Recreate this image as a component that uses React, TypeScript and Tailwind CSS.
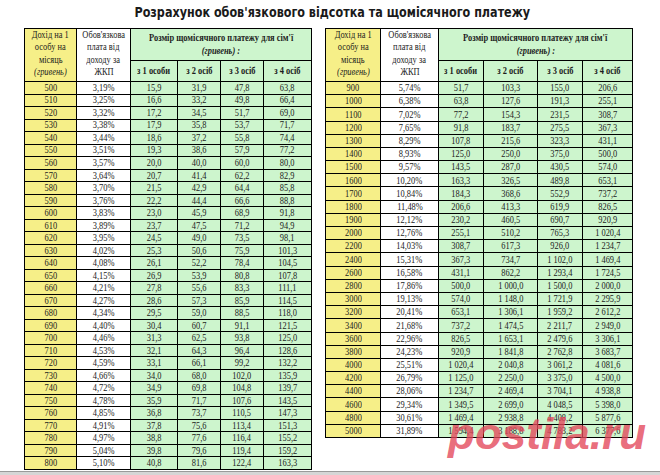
import React from 'react'

type Row = [string, string, string, string, string, string]

const leftRows: Row[] = [
  ['500', '3,19%', '15,9', '31,9', '47,8', '63,8'],
  ['510', '3,25%', '16,6', '33,2', '49,8', '66,4'],
  ['520', '3,32%', '17,2', '34,5', '51,7', '69,0'],
  ['530', '3,38%', '17,9', '35,8', '53,7', '71,7'],
  ['540', '3,44%', '18,6', '37,2', '55,8', '74,4'],
  ['550', '3,51%', '19,3', '38,6', '57,9', '77,2'],
  ['560', '3,57%', '20,0', '40,0', '60,0', '80,0'],
  ['570', '3,64%', '20,7', '41,4', '62,2', '82,9'],
  ['580', '3,70%', '21,5', '42,9', '64,4', '85,8'],
  ['590', '3,76%', '22,2', '44,4', '66,6', '88,8'],
  ['600', '3,83%', '23,0', '45,9', '68,9', '91,8'],
  ['610', '3,89%', '23,7', '47,5', '71,2', '94,9'],
  ['620', '3,95%', '24,5', '49,0', '73,5', '98,1'],
  ['630', '4,02%', '25,3', '50,6', '75,9', '101,3'],
  ['640', '4,08%', '26,1', '52,2', '78,4', '104,5'],
  ['650', '4,15%', '26,9', '53,9', '80,8', '107,8'],
  ['660', '4,21%', '27,8', '55,6', '83,3', '111,1'],
  ['670', '4,27%', '28,6', '57,3', '85,9', '114,5'],
  ['680', '4,34%', '29,5', '59,0', '88,5', '118,0'],
  ['690', '4,40%', '30,4', '60,7', '91,1', '121,5'],
  ['700', '4,46%', '31,3', '62,5', '93,8', '125,0'],
  ['710', '4,53%', '32,1', '64,3', '96,4', '128,6'],
  ['720', '4,59%', '33,1', '66,1', '99,2', '132,2'],
  ['730', '4,66%', '34,0', '68,0', '102,0', '135,9'],
  ['740', '4,72%', '34,9', '69,8', '104,8', '139,7'],
  ['750', '4,78%', '35,9', '71,7', '107,6', '143,5'],
  ['760', '4,85%', '36,8', '73,7', '110,5', '147,3'],
  ['770', '4,91%', '37,8', '75,6', '113,4', '151,3'],
  ['780', '4,97%', '38,8', '77,6', '116,4', '155,2'],
  ['790', '5,04%', '39,8', '79,6', '119,4', '159,2'],
  ['800', '5,10%', '40,8', '81,6', '122,4', '163,3'],
]

const rightRows: Row[] = [
  ['900', '5,74%', '51,7', '103,3', '155,0', '206,6'],
  ['1000', '6,38%', '63,8', '127,6', '191,3', '255,1'],
  ['1100', '7,02%', '77,2', '154,3', '231,5', '308,7'],
  ['1200', '7,65%', '91,8', '183,7', '275,5', '367,3'],
  ['1300', '8,29%', '107,8', '215,6', '323,3', '431,1'],
  ['1400', '8,93%', '125,0', '250,0', '375,0', '500,0'],
  ['1500', '9,57%', '143,5', '287,0', '430,5', '574,0'],
  ['1600', '10,20%', '163,3', '326,5', '489,8', '653,1'],
  ['1700', '10,84%', '184,3', '368,6', '552,9', '737,2'],
  ['1800', '11,48%', '206,6', '413,3', '619,9', '826,5'],
  ['1900', '12,12%', '230,2', '460,5', '690,7', '920,9'],
  ['2000', '12,76%', '255,1', '510,2', '765,3', '1 020,4'],
  ['2200', '14,03%', '308,7', '617,3', '926,0', '1 234,7'],
  ['2400', '15,31%', '367,3', '734,7', '1 102,0', '1 469,4'],
  ['2600', '16,58%', '431,1', '862,2', '1 293,4', '1 724,5'],
  ['2800', '17,86%', '500,0', '1 000,0', '1 500,0', '2 000,0'],
  ['3000', '19,13%', '574,0', '1 148,0', '1 721,9', '2 295,9'],
  ['3200', '20,41%', '653,1', '1 306,1', '1 959,2', '2 612,2'],
  ['3400', '21,68%', '737,2', '1 474,5', '2 211,7', '2 949,0'],
  ['3600', '22,96%', '826,5', '1 653,1', '2 479,6', '3 306,1'],
  ['3800', '24,23%', '920,9', '1 841,8', '2 762,8', '3 683,7'],
  ['4000', '25,51%', '1 020,4', '2 040,8', '3 061,2', '4 081,6'],
  ['4200', '26,79%', '1 125,0', '2 250,0', '3 375,0', '4 500,0'],
  ['4400', '28,06%', '1 234,7', '2 469,4', '3 704,1', '4 938,8'],
  ['4600', '29,34%', '1 349,5', '2 699,0', '4 048,5', '5 398,0'],
  ['4800', '30,61%', '1 469,4', '2 938,8', '4 408,2', '5 877,6'],
  ['5000', '31,89%', '1 594,4', '3 188,8', '4 783,2', '6 377,6'],
]

const YELLOW = 'bg-[#f6ef88]'
const GREEN = 'bg-[#cdf5cd]'

// the source image is squeezed horizontally, so every label gets scale-x-80
function T({ children, className = '' }: { children: React.ReactNode; className?: string }) {
  return <span className={`inline-block scale-x-80 whitespace-nowrap ${className}`}>{children}</span>
}

function Cell({ bg, children }: { bg: string; children: React.ReactNode }) {
  return <div className={`${bg} flex items-center justify-center overflow-hidden`}>{children}</div>
}

function RateTable({ rows, variant }: { rows: Row[]; variant: 'left' | 'right' }) {
  const grid =
    variant === 'left'
      ? 'h-[442px] grid-cols-[51px_53px_46px_42px_42px_47px] grid-rows-[31px_20px_repeat(31,minmax(0,1fr))]'
      : 'h-[410px] grid-cols-[54px_57px_44px_53px_44px_49px] grid-rows-[31px_20px_repeat(27,minmax(0,1fr))]'

  return (
    <div
      className={`grid ${grid} gap-px bg-black border border-black font-['Liberation_Serif',serif] text-[10.5px] text-[#1c1c1c]`}
    >
      {/* rate header cells span both header rows */}
      <div className={`${YELLOW} row-span-2 flex flex-col items-center justify-center leading-[12.3px] pb-[3px]`}>
        <T>Дохід на 1</T>
        <T>особу на</T>
        <T>місяць</T>
        <T className="italic">(гривень)</T>
      </div>
      <div className="bg-white row-span-2 flex flex-col items-center justify-center leading-[12.3px] pb-[3px]">
        <T>Обов'язкова</T>
        <T>плата від</T>
        <T>доходу за</T>
        <T>ЖКП</T>
      </div>
      <div className={`${GREEN} col-span-4 flex flex-col items-center justify-center leading-[12.3px] font-bold`}>
        <T>Розмір щомісячного платежу для сім'ї</T>
        <T className="italic">(гривень) :</T>
      </div>
      {['з 1 особи', 'з 2 осіб', 'з 3 осіб', 'з 4 осіб'].map((h) => (
        <Cell key={h} bg={GREEN}>
          <T className="font-bold">{h}</T>
        </Cell>
      ))}

      {rows.map((r) => (
        <React.Fragment key={r[0]}>
          <Cell bg={YELLOW}><T>{r[0]}</T></Cell>
          <Cell bg="bg-white"><T>{r[1]}</T></Cell>
          <Cell bg={GREEN}><T>{r[2]}</T></Cell>
          <Cell bg={GREEN}><T>{r[3]}</T></Cell>
          <Cell bg={GREEN}><T>{r[4]}</T></Cell>
          <Cell bg={GREEN}><T>{r[5]}</T></Cell>
        </React.Fragment>
      ))}
    </div>
  )
}

export default function App() {
  return (
    <div className="relative w-[660px] h-[475px] bg-white flex flex-col overflow-hidden">
      <div className="h-[28px] flex justify-center pl-[5px] pt-[3px]">
        <T className="font-['DejaVu_Sans',sans-serif] font-bold text-[14px] leading-[18px] text-[#1a1a1a]">
          Розрахунок обов'язкового відсотка та щомісячного платежу
        </T>
      </div>

      <div className="flex items-start gap-[13px] pl-[24px]">
        <RateTable rows={leftRows} variant="left" />
        <RateTable rows={rightRows} variant="right" />
      </div>

      <div className="mt-auto h-[4px] border-t border-[#9a9a9a] bg-[#d6d6d6]" />

      {/* watermark */}
      <div className="absolute left-[448px] top-[412px] font-['Liberation_Sans',sans-serif] font-bold italic text-[44px] leading-none text-[#e3475b]/80 select-none">
        postila.ru
      </div>
    </div>
  )
}
